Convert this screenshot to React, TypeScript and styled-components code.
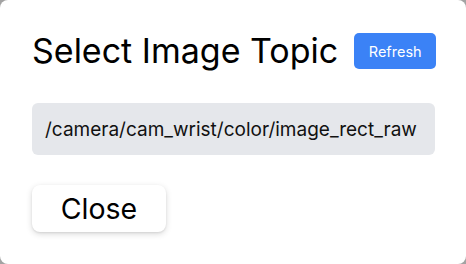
import React from 'react'
import styled, { createGlobalStyle } from 'styled-components'

const GlobalStyle = createGlobalStyle`
	html, body {
		margin: 0;
		padding: 0;
		background: #a3a3a3;
		font-family: Inter, "Noto Sans", sans-serif;
	}
`

const Dialog = styled.div`
	box-sizing: border-box;
	width: 466px;
	height: 264px;
	background: #ffffff;
	border-radius: 8px;
	padding: 33px 31px 32px 32px;
	display: flex;
	flex-direction: column;
`

const Header = styled.div`
	display: flex;
	align-items: center;
	gap: 16px;
	height: 36px;
`

const Title = styled.h2`
	margin: 0;
	font-size: 34px;
	font-weight: 400;
	line-height: 36px;
	white-space: nowrap;
	color: #000;
`

const RefreshButton = styled.button`
	flex-shrink: 0;
	height: 36px;
	width: 82px;
	padding: 0;
	border: none;
	border-radius: 5px;
	background: #3b82f6;
	color: #ffffff;
	font-family: inherit;
	font-size: 14.5px;
`

const TopicItem = styled.div`
	margin-top: 34px;
	height: 52px;
	box-sizing: border-box;
	padding: 0 13px;
	display: flex;
	align-items: center;
	background: #e5e7eb;
	border-radius: 6px;
	font-size: 19px;
	color: #111;
`

const CloseButton = styled.button`
	margin-top: 30px;
	align-self: flex-start;
	width: 134px;
	height: 47px;
	border: none;
	border-radius: 8px;
	background: #ffffff;
	box-shadow: 0 2px 6px rgba(0, 0, 0, 0.15), 0 1px 2px rgba(0, 0, 0, 0.08);
	font-family: inherit;
	font-size: 28.5px;
	color: #000;
`

export default function App() {
	return (
		<>
			<GlobalStyle />
			<Dialog>
				<Header>
					<Title>Select Image Topic</Title>
					<RefreshButton>Refresh</RefreshButton>
				</Header>
				<TopicItem>/camera/cam_wrist/color/image_rect_raw</TopicItem>
				<CloseButton>Close</CloseButton>
			</Dialog>
		</>
	)
}
